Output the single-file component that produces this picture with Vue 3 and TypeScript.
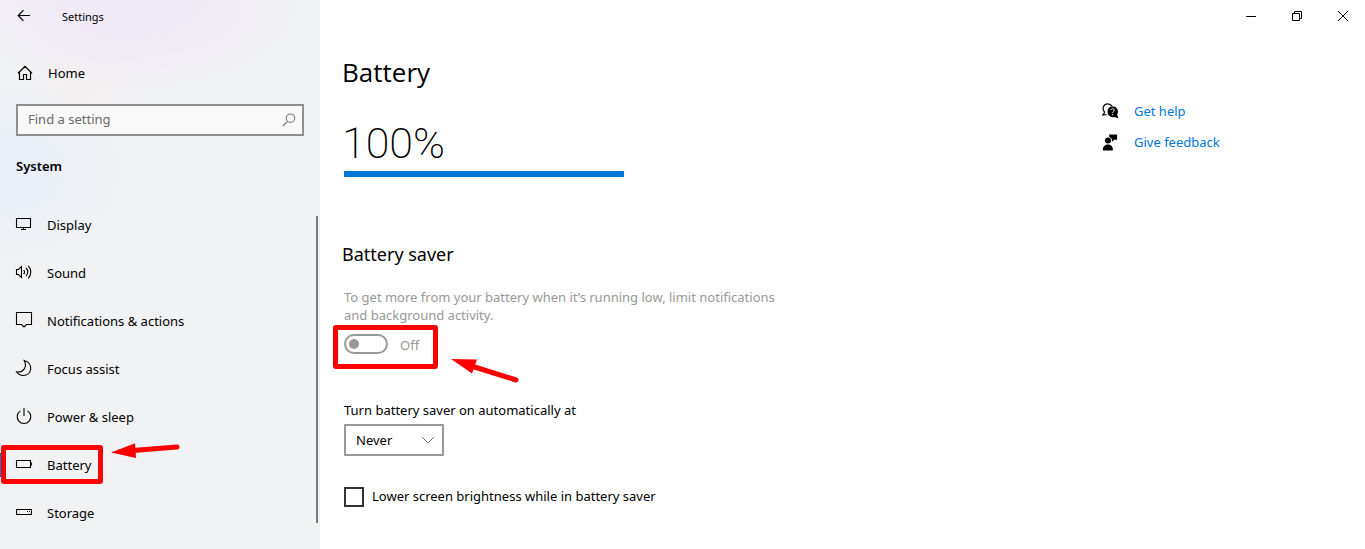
<script setup lang="ts">
import { ref } from 'vue'

interface NavItem {
  id: string
  label: string
}

const items: NavItem[] = [
  { id: 'display', label: 'Display' },
  { id: 'sound', label: 'Sound' },
  { id: 'notifications', label: 'Notifications & actions' },
  { id: 'focus', label: 'Focus assist' },
  { id: 'power', label: 'Power & sleep' },
  { id: 'battery', label: 'Battery' },
  { id: 'storage', label: 'Storage' },
]

const active = ref('battery')
const search = ref('')
const saverOn = ref(false)
const threshold = ref('Never')
const lowerBrightness = ref(false)
const level = 100
</script>

<template>
  <div class="window">
    <aside class="sidebar">
      <header class="titlebar">
        <button class="back" type="button" aria-label="Back">
          <svg width="16" height="16" viewBox="0 0 16 16" fill="none" stroke="#000" stroke-width="1.2">
            <path d="M14 7.500H2.500M7.500 2.200L2.200 7.500l5.300 5.300" />
          </svg>
        </button>
        <span class="app-name">Settings</span>
      </header>

      <a class="home" href="#home">
        <svg width="16" height="16" viewBox="0 0 16 16" fill="none" stroke="#000" stroke-width="1.2">
          <path d="M1 8.200L8 1.300l7 6.900M2.500 7v7.500h4V9.500h3v5h4V7" />
        </svg>
        <span>Home</span>
      </a>

      <div class="search">
        <input v-model="search" type="text" placeholder="Find a setting" aria-label="Find a setting" />
        <svg width="14" height="14" viewBox="0 0 14 14" fill="none" stroke="#777" stroke-width="1.1">
          <circle cx="8.500" cy="5.200" r="4.200" />
          <path d="M5.500 8.300L.8 13" />
        </svg>
      </div>

      <h2 class="group">System</h2>

      <div class="nav-area">
        <nav>
          <a
            v-for="item in items"
            :key="item.id"
            :href="'#' + item.id"
            class="nav-item"
            :class="{ active: item.id === active }"
            @click.prevent="active = item.id"
          >
            <svg class="nav-icon" width="18" height="18" viewBox="0 0 18 18" fill="none" stroke="#000" stroke-width="1.100">
              <template v-if="item.id === 'display'">
                <path d="M1.500 3.500h14v9h-14zM8.500 12.500v2M6 14.500h5" />
              </template>
              <template v-else-if="item.id === 'sound'">
                <path d="M1.500 6.500v5h2l3 3v-11l-3 3z" />
                <path d="M8.700 7c1.100 1.200 1.100 3 0 4.200M11 5c2.400 2.300 2.400 5.900 0 8.200M13.200 2.800c3.500 3.500 3.500 9 0 12.500" />
              </template>
              <template v-else-if="item.id === 'notifications'">
                <path d="M1.500 1.500h15v12h-5L9 16l-2.500-2.500h-5z" />
              </template>
              <template v-else-if="item.id === 'focus'">
                <path d="M9.200 1.500c10 3 7.600 15 -.9 15-3 0-5.400-1.500-6.800-3.700 6.500 1.200 11.300-4.600 7.700-11.300z" />
              </template>
              <template v-else-if="item.id === 'power'">
                <path d="M5.500 3.900a6.800 6.800 0 1 0 7 0" />
                <path d="M9 1v8" />
              </template>
              <template v-else-if="item.id === 'battery'">
                <path d="M1.500 5.500h14v7h-14z" />
                <path d="M16.500 7.500v3" />
              </template>
              <template v-else>
                <rect x="1.500" y="6.500" width="15" height="5" rx="0.500" />
                <path d="M12 8.500h1M14 8.500h1" />
              </template>
            </svg>
            <span>{{ item.label }}</span>
            <template v-if="item.id === 'battery'">
              <span class="mark mark-nav" aria-hidden="true"></span>
              <svg class="arrow arrow-nav" width="70" height="20" viewBox="0 0 70 20" aria-hidden="true">
                <path d="M22 9.500L66 6" stroke="#f00" stroke-width="5" stroke-linecap="round" />
                <path d="M0 11.500L24 2.300l1 14.600z" fill="#f00" />
              </svg>
            </template>
          </a>
        </nav>
        <div class="scroll-thumb"></div>
      </div>
    </aside>

    <div class="page">
      <header class="caption">
        <button type="button" aria-label="Minimize">
          <svg width="12" height="12" viewBox="0 0 12 12" stroke="#000" fill="none"><path d="M2 6.500h10" /></svg>
        </button>
        <button type="button" aria-label="Restore">
          <svg width="12" height="12" viewBox="0 0 12 12" stroke="#000" fill="none">
            <path d="M2.500 3.500h7v7h-7zM4.500 3.500v-2h7v7h-2" />
          </svg>
        </button>
        <button type="button" aria-label="Close">
          <svg width="12" height="12" viewBox="0 0 12 12" stroke="#000" fill="none">
            <path d="M2 1l10 10M12 1L2 11" />
          </svg>
        </button>
      </header>

      <div class="columns">
        <main class="content">
          <h1>Battery</h1>
          <div class="percent">{{ level }}%</div>
          <div class="meter"><div class="meter-fill" :style="{ width: level + '%' }"></div></div>

          <h2>Battery saver</h2>
          <p class="hint">
            To get more from your battery when it’s running low, limit notifications and background activity.
          </p>
          <div class="toggle-row">
            <input id="saver" v-model="saverOn" class="toggle" type="checkbox" role="switch" disabled />
            <label for="saver">{{ saverOn ? 'On' : 'Off' }}</label>
            <span class="mark mark-toggle" aria-hidden="true"></span>
            <svg class="arrow arrow-toggle" width="68" height="28" viewBox="0 0 68 28" aria-hidden="true">
              <path d="M22 10.500L65 24" stroke="#f00" stroke-width="5" stroke-linecap="round" />
              <path d="M0 3l26 .5-5 14z" fill="#f00" />
            </svg>
          </div>

          <label class="field-label" for="auto">Turn battery saver on automatically at</label>
          <div class="select-box">
            <select id="auto" v-model="threshold">
              <option>Never</option>
              <option>10%</option>
              <option>20%</option>
              <option>50%</option>
            </select>
            <svg width="14" height="8" viewBox="0 0 14 8" fill="none" stroke="#666"><path d="M1 1l6 6 6-6" /></svg>
          </div>

          <div class="check-row">
            <input id="dim" v-model="lowerBrightness" type="checkbox" />
            <label for="dim">Lower screen brightness while in battery saver</label>
          </div>
        </main>

        <aside class="help">
          <a href="#help">
            <svg width="17" height="17" viewBox="0 0 17 17">
              <path d="M2.800 9.400C-.6 5.600 1.700.8 5.700.8c2 0 3.500.9 4.300 2.400M2.800 9.400L.7 12l4-.5" fill="none" stroke="#000" stroke-width="1.200" />
              <path d="M10.600 3.200a5.400 5.400 0 0 1 4.600 8.300l1.100 4-3.600-1.600a5.500 5.500 0 1 1-2.100-10.700z" fill="#000" />
              <path d="M8.900 7.200c0-2.200 3.500-2.100 3.400 0 0 1.200-1.600 1.300-1.600 2.700M10.700 11v1.300" fill="none" stroke="#fff" stroke-width="1" />
            </svg>
            <span>Get help</span>
          </a>
          <a href="#feedback">
            <svg width="17" height="17" viewBox="0 0 17 17">
              <circle cx="6" cy="6.500" r="3" />
              <path d="M1 16.500V15c0-6 9.800-6 9.800 0v1.500zM7.200.500h7.900v5.200h-3L9.900 7.800V5.100L7.200 2.700z" />
            </svg>
            <span>Give feedback</span>
          </a>
        </aside>
      </div>
    </div>
  </div>
</template>

<style>
html,
body {
  margin: 0;
  background: #fff;
}
</style>

<style scoped>
* {
  box-sizing: border-box;
}
.window {
  display: flex;
  min-height: 100vh;
  font-family: 'Noto Sans', 'Open Sans', sans-serif;
  font-size: 13px;
  line-height: 18px;
  color: #000;
}
h1,
h2,
p {
  margin: 0;
}
a {
  color: inherit;
  text-decoration: none;
}
button {
  border: 0;
  padding: 0;
  background: none;
  display: flex;
  align-items: center;
  justify-content: center;
}
input,
select {
  font: inherit;
  color: inherit;
  margin: 0;
}
.sidebar {
  flex: 0 0 320px;
  background:
    radial-gradient(ellipse 170px 90px at 130px 0, #f0e9f6 35%, rgba(240, 233, 246, 0) 100%),
    radial-gradient(ellipse 120px 90px at 10px 170px, #e9eef8 20%, rgba(233, 238, 248, 0) 100%),
    radial-gradient(circle 60px at 85px 85px, #f5f0f1, rgba(245, 240, 241, 0)),
    #f1f2f4;
}
.titlebar {
  display: flex;
  align-items: center;
  height: 32px;
}
.back {
  width: 48px;
  height: 32px;
}
.app-name {
  margin-left: 14px;
  padding-top: 2px;
  font-size: 11px;
}
.home {
  display: flex;
  align-items: center;
  gap: 15px;
  height: 48px;
  margin-top: 17px;
  padding-left: 17px;
}
.search {
  position: relative;
  margin: 7px 16px 0;
}
.search input {
  display: block;
  width: 100%;
  height: 32px;
  padding: 0 32px 2px 10px;
  border: 2px solid #8d8f8e;
  border-radius: 0;
  background: #f9f9f9;
}
.search input::placeholder {
  color: #6a6a6a;
  opacity: 1;
}
.search svg {
  position: absolute;
  right: 8px;
  top: 9px;
}
.group {
  margin: 21px 16px 0;
  font-size: 13px;
  font-weight: 600;
}
.nav-area {
  display: flex;
  padding-top: 26px;
}
nav {
  flex: 1;
}
.nav-item {
  position: relative;
  display: flex;
  align-items: center;
  gap: 14px;
  height: 48px;
  padding-left: 15px;
}
.nav-item.active::before {
  content: '';
  position: absolute;
  left: 0;
  top: 12px;
  width: 4px;
  height: 24px;
  background: #0078d7;
}
.nav-icon {
  margin-bottom: 2px;
}
.scroll-thumb {
  width: 2px;
  margin: 15px 2px 14px 0;
  background: #7a7a7a;
}
.mark {
  position: absolute;
  border: 5px solid #f00;
  border-radius: 3px;
}
.mark-nav {
  left: 1px;
  top: 4px;
  width: 102px;
  height: 39px;
}
.arrow {
  position: absolute;
}
.arrow-nav {
  left: 111px;
  top: 0;
}
.page {
  flex: 1;
  min-width: 0;
}
.caption {
  display: flex;
  justify-content: flex-end;
  height: 32px;
}
.caption button {
  width: 46px;
}
.columns {
  display: flex;
  justify-content: space-between;
}
.content {
  flex: 1;
  max-width: 480px;
  padding: 22px 0 24px 24px;
}
h1 {
  margin-left: -2px;
  font-family: 'Open Sans', 'Noto Sans', sans-serif;
  font-size: 26px;
  line-height: 36px;
  font-weight: 400;
}
.percent {
  margin: 25px 0 0 -2px;
  padding-bottom: 0;
  font-family: Roboto, 'Noto Sans', sans-serif;
  font-size: 43px;
  line-height: 56px;
  font-weight: 200;
}
.meter {
  width: 280px;
  height: 6px;
  background: #ccc;
}
.meter-fill {
  height: 100%;
  background: #0078d7;
}
.content h2 {
  margin: 65px 0 0 -2px;
  font-size: 18px;
  line-height: 24px;
  font-weight: 400;
}
.hint {
  margin-top: 22px;
  color: #999;
}
.toggle-row {
  position: relative;
  display: flex;
  align-items: center;
  gap: 12px;
  height: 20px;
  margin-top: 10px;
  color: #999;
}
.toggle-row label {
  padding-top: 2px;
}
.toggle {
  appearance: none;
  display: flex;
  align-items: center;
  width: 44px;
  height: 20px;
  padding-left: 3px;
  border: 2px solid #999;
  border-radius: 10px;
  background: #fff;
}
.toggle::before {
  content: '';
  width: 10px;
  height: 10px;
  border-radius: 50%;
  background: #999;
}
.mark-toggle {
  left: -11px;
  top: -9px;
  width: 105px;
  height: 44px;
}
.arrow-toggle {
  left: 107px;
  top: 22px;
}
.field-label {
  display: block;
  margin-top: 47px;
}
.select-box {
  position: relative;
  width: 100px;
  margin-top: 5px;
}
.select-box select {
  appearance: none;
  display: block;
  width: 100%;
  height: 32px;
  padding: 0 28px 0 10px;
  border: 2px solid #999;
  border-radius: 0;
  background: #fff;
}
.select-box svg {
  position: absolute;
  right: 9px;
  top: 12px;
  pointer-events: none;
}
.check-row {
  display: flex;
  align-items: center;
  gap: 8px;
  margin-top: 31px;
}
.check-row label {
  padding-bottom: 2px;
}
.check-row input {
  appearance: none;
  width: 20px;
  height: 20px;
  border: 2px solid #333;
  background: #fff;
}
.check-row input:checked {
  background: #0078d7;
}
.help {
  display: flex;
  flex-direction: column;
  gap: 13px;
  flex: 0 0 263px;
  padding-top: 70px;
}
.help a {
  display: flex;
  align-items: center;
  gap: 15px;
  color: #0078d7;
}
</style>
